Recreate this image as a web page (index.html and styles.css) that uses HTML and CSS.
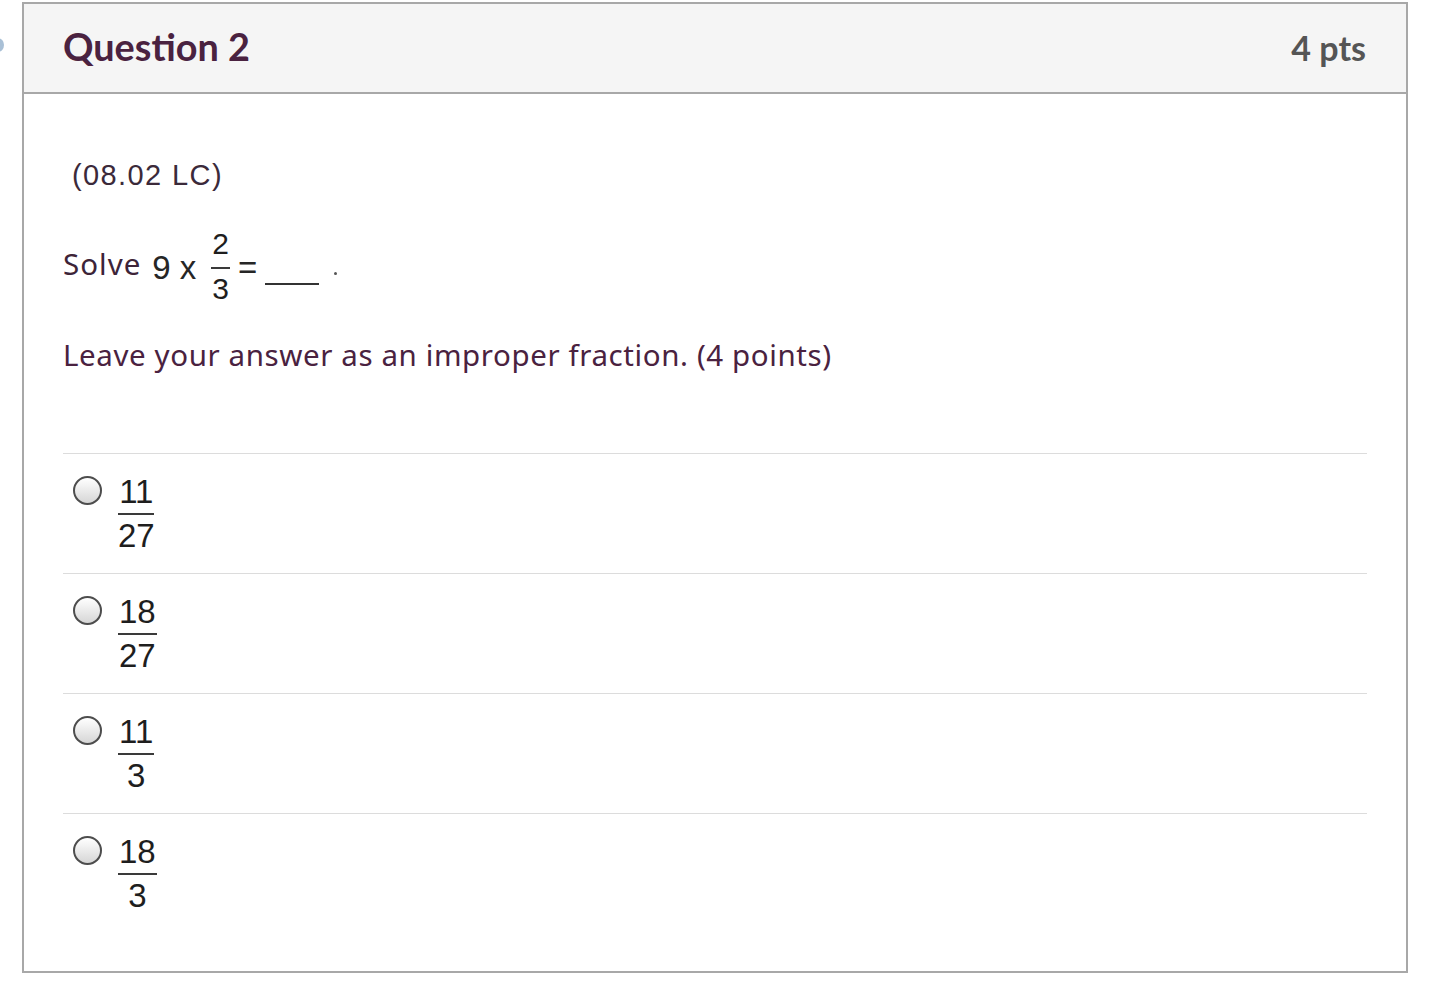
FILE: index.html
```html
<!DOCTYPE html>
<html>
<head>
<meta charset="utf-8">
<link rel="stylesheet" href="styles.css">
</head>
<body>
<div class="edge-dot"></div>
<div class="card">
  <div class="card-header">
    <div class="title">Question 2</div>
    <div class="pts">4 pts</div>
  </div>
  <div class="card-body">
    <div class="code">(08.02 LC)</div>
    <div class="solve">
      <span class="solve-word">Solve</span>
      <span class="math">9 x</span>
      <span class="frac small"><span class="num">2</span><span class="den">3</span></span>
      <span class="math eq">=</span>
      <span class="blank"></span>
      <span class="dot"></span>
    </div>
    <div class="instr">Leave your answer as an improper fraction. (4 points)</div>
    <div class="answers">
      <div class="answer">
        <span class="radio"></span>
        <span class="frac"><span class="num">11</span><span class="den">27</span></span>
      </div>
      <div class="answer">
        <span class="radio"></span>
        <span class="frac"><span class="num">18</span><span class="den">27</span></span>
      </div>
      <div class="answer">
        <span class="radio"></span>
        <span class="frac"><span class="num">11</span><span class="den">3</span></span>
      </div>
      <div class="answer">
        <span class="radio"></span>
        <span class="frac"><span class="num">18</span><span class="den">3</span></span>
      </div>
    </div>
  </div>
</div>
</body>
</html>
```

FILE: styles.css
```css
html, body {
  margin: 0;
  padding: 0;
  background: #ffffff;
}
body {
  position: relative;
  width: 1435px;
  height: 988px;
  overflow: hidden;
}
.edge-dot {
  position: absolute;
  left: -8px;
  top: 38px;
  width: 12px;
  height: 14px;
  border-radius: 50%;
  background: #a9c0d6;
}
.card {
  margin: 2px 0 0 22px;
  width: 1382px;
  height: 967px;
  border: 2px solid #a8a8a8;
  display: flex;
  flex-direction: column;
}
.card-header {
  height: 88px;
  background: #f5f5f5;
  border-bottom: 2px solid #a8a8a8;
  display: flex;
  align-items: center;
  justify-content: space-between;
  padding: 0 40px 0 39px;
  flex: none;
}
.title {
  font-family: Lato, "Liberation Sans", sans-serif;
  font-weight: 700;
  font-size: 37.8px;
  color: #4a2240;
  margin-top: -4px;
}
.pts {
  font-family: Lato, "Liberation Sans", sans-serif;
  font-weight: 700;
  font-size: 34px;
  color: #555555;
  margin-top: -2px;
}
.card-body {
  padding: 0 39px 0 39px;
  flex: 1;
  display: flex;
  flex-direction: column;
}
.code {
  font-family: "Liberation Sans", Arial, sans-serif;
  font-size: 29px;
  letter-spacing: 1.4px;
  color: #3b2a3a;
  margin: 63px 0 0 9px;
  line-height: 36px;
}
.solve {
  display: flex;
  align-items: center;
  margin-top: 35px;
  height: 80px;
}
.solve-word {
  font-family: "Noto Sans", sans-serif;
  font-size: 29.5px;
  letter-spacing: 1px;
  color: #3d2438;
  margin-right: 11px;
  margin-bottom: 9px;
}
.math {
  font-family: "Liberation Sans", Arial, sans-serif;
  font-size: 33px;
  color: #262626;
}
.math.eq {
  margin: 0 8px 0 8px;
}
.frac {
  display: inline-flex;
  flex-direction: column;
  align-items: center;
  font-family: "Liberation Sans", Arial, sans-serif;
  color: #1e1e1e;
  font-size: 33px;
  line-height: 33px;
}
.frac .num {
  border-bottom: 2px solid #3a3a3a;
  padding: 0 1px 5px;
}
.frac .den {
  padding-top: 4px;
}
.frac.small {
  font-size: 30px;
  line-height: 30px;
  margin-left: 15px;
  margin-bottom: 3px;
}
.frac.small .num {
  padding: 0 1px 8px;
}
.frac.small .den {
  padding-top: 5px;
}
.blank {
  display: inline-block;
  width: 54px;
  border-bottom: 2px solid #333;
  margin-top: 32px;
}
.dot {
  display: inline-block;
  width: 3px;
  height: 3px;
  border-radius: 50%;
  background: #555;
  margin-left: 15px;
  margin-top: 10px;
}
.instr {
  font-family: "Noto Sans", sans-serif;
  font-size: 29.5px;
  letter-spacing: 0.6px;
  color: #4a2240;
  margin-top: 27px;
  line-height: 40px;
}
.answers {
  margin-top: 78px;
  display: flex;
  flex-direction: column;
}
.answer {
  height: 120px;
  border-top: 1px solid #dcdcdc;
  display: flex;
  align-items: flex-start;
  padding: 21px 0 0 10px;
  box-sizing: border-box;
}
.radio {
  width: 25px;
  height: 25px;
  border: 2px solid #4d4d4d;
  border-radius: 50%;
  background: linear-gradient(#ffffff, #d6d6d6);
  margin: 1px 16px 0 0;
  flex: none;
}
```
